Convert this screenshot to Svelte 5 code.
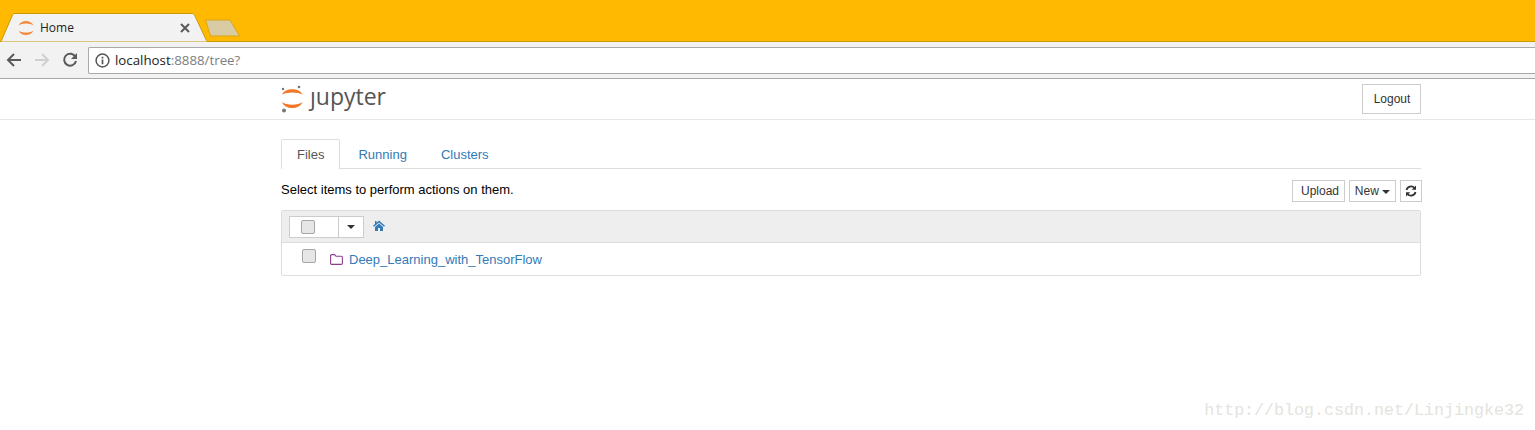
<script lang="ts">
  let tabs = [
    { label: 'Files', active: true },
    { label: 'Running', active: false },
    { label: 'Clusters', active: false }
  ];
</script>

<div class="page">
  <div class="chrome">
    <div class="tabstrip">
      <div class="tab">
        <svg class="tab-shape" width="215" height="29" viewBox="0 0 215 29">
          <path d="M0 28.500 H1 L12.500 2 C13 1 13.500 0.500 15 0.500 H192 C193.500 0.500 194 1 194.500 2 L206 26.500 C206.600 28 207 28.500 208.500 28.500 H215" fill="#f2f2f2" stroke="#c99a00" />
        </svg>
        <svg class="favicon" width="16" height="16" viewBox="0 0 16 16">
          <path d="M0.500 5.500 C3 -0.500 13 -0.500 15.500 5.500 C12.500 2.800 3.500 2.800 0.500 5.500Z" fill="#f58a3c" />
          <path d="M0.500 10.500 C3 16.500 13 16.500 15.500 10.500 C12.500 13.200 3.500 13.200 0.500 10.500Z" fill="#f58a3c" />
        </svg>
        <span class="tab-title">Home</span>
        <svg class="tab-close" width="10" height="10" viewBox="0 0 10 10">
          <path d="M1 1 L9 9 M9 1 L1 9" stroke="#5a5a5a" stroke-width="2" />
        </svg>
      </div>
      <svg class="newtab" width="36" height="18" viewBox="0 0 36 18">
        <path d="M0.500 1 H25 L34.500 17 H5.500 Z" fill="#d9cba3" stroke="#d9a514" />
      </svg>
    </div>
    <div class="toolbar">
      <svg width="16" height="16" viewBox="0 0 16 16">
        <path d="M15 8 H2 M8 2 L2 8 L8 14" fill="none" stroke="#5a5a5a" stroke-width="2" />
      </svg>
      <svg width="16" height="16" viewBox="0 0 16 16">
        <path d="M1 8 H14 M8 2 L14 8 L8 14" fill="none" stroke="#cfcfcf" stroke-width="2" />
      </svg>
      <svg width="16" height="16" viewBox="0 0 16 16">
        <path d="M13.500 5 A6 6 0 1 0 14 9" fill="none" stroke="#5a5a5a" stroke-width="2" />
        <path d="M15 1 V7 H9 Z" fill="#5a5a5a" />
      </svg>
      <div class="omnibox">
        <svg width="15" height="15" viewBox="0 0 15 15">
          <circle cx="7.500" cy="7.500" r="6.400" fill="none" stroke="#555" stroke-width="1.500" />
          <path d="M7.500 6.500 V11.200 M7.500 3.800 V5.400" stroke="#555" stroke-width="1.700" />
        </svg>
        <span class="url"><span class="host">localhost</span>:8888/tree?</span>
      </div>
    </div>
  </div>

  <header class="site-header">
    <div class="container header-row">
      <div class="logo">
        <svg width="22" height="28" viewBox="0 0 22 28">
          <circle cx="2" cy="4" r="1.200" fill="#767677" />
          <circle cx="18" cy="2" r="1.300" fill="#767677" />
          <circle cx="3" cy="25.500" r="2" fill="#767677" />
          <path d="M1 9.500 C4 2.500 18.500 2.500 21.500 9.500 C17 6.800 5.500 6.800 1 9.500Z" fill="#f37726" />
          <path d="M1 17 C4 25 18.500 25 21.500 17 C17 20.500 5.500 20.500 1 17Z" fill="#f37726" />
        </svg>
        <span class="wordmark">ȷupyter</span>
      </div>
      <button class="btn logout">Logout</button>
    </div>
  </header>

  <main class="container">
    <nav class="tabs">
      {#each tabs as t}
        <span class="nav-tab" class:active={t.active}>{t.label}</span>
      {/each}
    </nav>

    <div class="actions">
      <span class="hint">Select items to perform actions on them.</span>
      <div class="buttons">
        <button class="btn small upload">Upload</button>
        <button class="btn small new">New <i class="caret"></i></button>
        <button class="btn small refresh" aria-label="Refresh">
          <svg width="12" height="12" viewBox="0 0 12 12">
            <path d="M1.500 5 A4.600 4.600 0 0 1 9.500 3 M10.500 7 A4.600 4.600 0 0 1 2.500 9" fill="none" stroke="#333" stroke-width="1.800" />
            <path d="M11 0.500 V4.800 H6.700 Z M1 11.500 V7.200 H5.300 Z" fill="#333" />
          </svg>
        </button>
      </div>
    </div>

    <div class="list">
      <div class="list-head">
        <div class="select-group">
          <span class="select-box"><i class="check"></i></span>
          <span class="select-caret"><i class="caret dark"></i></span>
        </div>
        <svg class="home" width="12" height="11" viewBox="0 0 12 11">
          <path d="M6 0.500 L12 5.800 L11 6.800 L6 2.400 L1 6.800 L0 5.800 L2 4 V1 H3.500 V2.700 Z" fill="#337ab7" />
          <path d="M2 7 L6 3.500 L10 7 V11 H7 V8 H5 V11 H2 Z" fill="#337ab7" />
        </svg>
      </div>
      <div class="list-row">
        <i class="check row-check"></i>
        <svg class="folder" width="13" height="11" viewBox="0 0 13 11">
          <path d="M0.600 9.300 V1.700 C0.600 1 1 0.600 1.700 0.600 H4.600 L6 2.300 H11.300 C12 2.300 12.400 2.700 12.400 3.400 V9.300 C12.400 10 12 10.400 11.300 10.400 H1.700 C1 10.400 0.600 10 0.600 9.300Z" fill="none" stroke="#8d3f8d" stroke-width="1.100" />
        </svg>
        <span class="item-link">Deep_Learning_with_TensorFlow</span>
      </div>
    </div>
  </main>

  <div class="watermark">http://blog.csdn.net/Linjingke32</div>
</div>

<style>
  :global(body) {
    margin: 0;
    background: #fff;
  }

  .page {
    position: relative;
    height: 430px;
    overflow: hidden;
    font-family: "Liberation Sans", Arial, sans-serif;
    font-size: 13px;
    color: #000;
  }

  .chrome {
    display: flex;
    flex-direction: column;
  }

  .tabstrip {
    height: 41px;
    background: #ffb900;
    border-bottom: 1px solid #c99a00;
    display: flex;
    align-items: flex-end;
  }

  .tab {
    position: relative;
    width: 215px;
    height: 29px;
    margin-bottom: -1px;
    display: flex;
    align-items: center;
    padding-left: 18px;
    box-sizing: border-box;
  }

  .tab-shape {
    position: absolute;
    left: 0;
    top: 0;
  }

  .favicon,
  .tab-title,
  .tab-close {
    position: relative;
  }

  .tab-title {
    margin-left: 6px;
    font-family: "Open Sans", sans-serif;
    font-size: 12px;
    color: #222;
  }

  .tab-close {
    margin-left: 106px;
  }

  .newtab {
    margin-left: -10px;
    margin-bottom: 4px;
  }

  .toolbar {
    height: 36px;
    background: #f2f2f2;
    border-bottom: 1px solid #a8a8a8;
    display: flex;
    align-items: center;
    gap: 12px;
    padding-left: 6px;
  }

  .omnibox {
    flex: 1;
    height: 27px;
    margin-left: -2px;
    background: #fff;
    border: 1px solid #a9a9a9;
    border-right: none;
    border-radius: 2px 0 0 2px;
    box-sizing: border-box;
    display: flex;
    align-items: center;
    padding-left: 6px;
    gap: 5px;
  }

  .url {
    font-family: "Open Sans", sans-serif;
    font-size: 13.300px;
    color: #808080;
  }

  .host {
    color: #222;
  }

  .site-header {
    height: 40px;
    border-bottom: 1px solid #e7e7e7;
  }

  .container {
    width: 1140px;
    margin-left: 281px;
  }

  .header-row {
    display: flex;
    justify-content: space-between;
    align-items: center;
    height: 40px;
  }

  .logo {
    display: flex;
    align-items: center;
    gap: 7px;
  }

  .wordmark {
    font-family: "Open Sans", sans-serif;
    font-size: 23px;
    color: #555;
    line-height: 28px;
    margin-top: -6px;
  }

  .btn {
    font-family: "Liberation Sans", Arial, sans-serif;
    font-size: 12px;
    color: #333;
    background: #fff;
    border: 1px solid #ccc;
    padding: 0;
    box-sizing: border-box;
  }

  .logout {
    width: 59px;
    height: 30px;
    padding-left: 1px;
  }

  .tabs {
    margin-top: 19px;
    height: 30px;
    border-bottom: 1px solid #ddd;
    display: flex;
    box-sizing: border-box;
  }

  .nav-tab {
    padding: 0 15px;
    line-height: 30px;
    color: #337ab7;
    margin-right: 2px;
    border: 1px solid transparent;
    border-bottom: none;
    height: 30px;
    box-sizing: border-box;
  }

  .nav-tab.active {
    color: #555;
    background: #fff;
    border-color: #ddd;
    border-radius: 2px 2px 0 0;
  }

  .actions {
    margin-top: 11px;
    height: 22px;
    display: flex;
    justify-content: space-between;
    align-items: center;
    margin-right: -1px;
  }

  .hint {
    margin-top: -4px;
  }

  .buttons {
    display: flex;
    gap: 4px;
  }

  .small {
    height: 22px;
  }

  .upload {
    width: 53px;
    padding-left: 8px;
    text-align: left;
  }

  .new {
    width: 47px;
  }

  .refresh {
    width: 22px;
    display: flex;
    align-items: center;
    justify-content: center;
  }

  .caret {
    display: inline-block;
    width: 0;
    height: 0;
    vertical-align: middle;
    border-top: 4px solid #333;
    border-left: 4px solid transparent;
    border-right: 4px solid transparent;
  }

  .list {
    margin-top: 8px;
    border: 1px solid #ddd;
    border-radius: 2px;
    height: 66px;
    box-sizing: border-box;
  }

  .list-head {
    height: 31px;
    background: #eee;
    border-bottom: 1px solid #ddd;
    display: flex;
    align-items: center;
    padding-left: 7px;
    gap: 9px;
  }

  .select-group {
    display: flex;
    height: 22px;
    background: #fff;
    border: 1px solid #ccc;
    box-sizing: border-box;
  }

  .select-box {
    width: 49px;
    display: flex;
    align-items: center;
    padding-left: 11px;
    box-sizing: border-box;
    border-right: 1px solid #ccc;
  }

  .select-caret {
    width: 24px;
    display: flex;
    align-items: center;
    justify-content: center;
  }

  .home {
    margin-top: -3px;
  }

  .check {
    display: block;
    width: 12px;
    height: 12px;
    background: #e6e6e6;
    border: 1px solid #a6a6a6;
    border-radius: 2px;
  }

  .list-row {
    height: 33px;
    display: flex;
    align-items: center;
  }

  .row-check {
    margin-left: 20px;
    margin-top: -7px;
  }

  .folder {
    margin-left: 14px;
    margin-top: -1px;
  }

  .item-link {
    margin-left: 6px;
    color: #337ab7;
  }

  .watermark {
    position: absolute;
    right: 11px;
    bottom: 10px;
    font-family: "Liberation Mono", monospace;
    font-size: 16.670px;
    color: #e4e4dc;
  }
</style>
